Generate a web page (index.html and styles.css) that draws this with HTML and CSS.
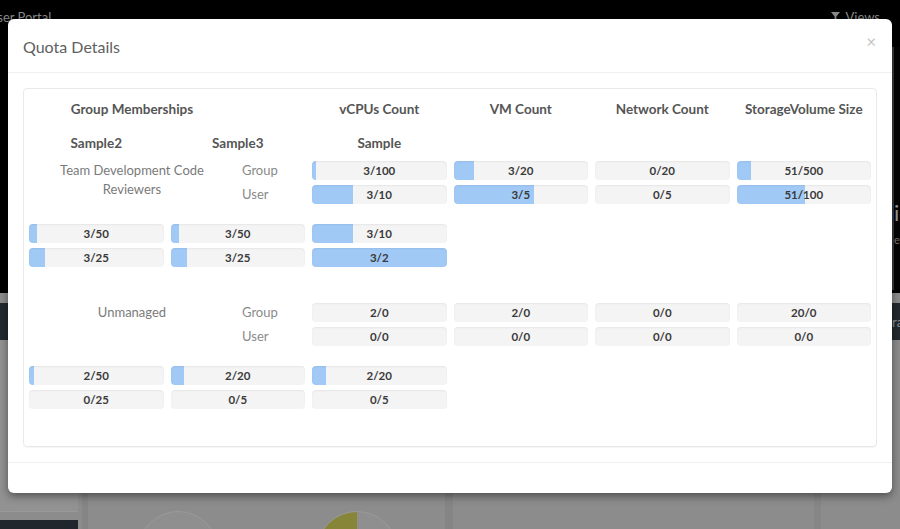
FILE: index.html
```html
<!DOCTYPE html>
<html>
<head>
<meta charset="utf-8">
<title>Quota Details</title>
<link rel="stylesheet" href="styles.css">
</head>
<body>
<div class="page">
  <div class="hero">
    <div class="topbar">
      <span class="brand">User Portal</span>
      <span class="views"><svg class="funnel" viewBox="0 0 10 12" width="9" height="11"><path d="M0 0h10L6 5v6l-2 1V5z" fill="#8a8a8a"/></svg>Views</span>
    </div>
    <div class="hero-body">
      <div class="side"><div class="side-title">ie</div><div class="side-sub">ev</div></div>
    </div>
  </div>
  <div class="tabbar"><span class="tab-text">ra</span></div>
  <div class="content">
    <aside class="sidebar"><div class="sb-box"></div><div class="sb-dark"></div></aside>
    <div class="cards">
      <div class="card first"><div class="chart plain"></div><div class="chart pie"></div></div>
      <div class="card second"></div>
      <div class="card third"></div>
    </div>
  </div>
</div>

<div class="modal">
  <div class="modal-header">
    <h4 class="modal-title">Quota Details</h4>
    <span class="close">×</span>
  </div>
  <div class="modal-body">
    <div class="panel">
      <div class="grid head">
        <div class="span2"><div class="name">Group Memberships</div></div>
        <div>vCPUs Count</div>
        <div>VM Count</div>
        <div>Network Count</div>
        <div>StorageVolume Size</div>
      </div>
      <div class="grid head samples">
        <div>Sample2</div>
        <div>Sample3</div>
        <div>Sample</div>
      </div>

      <div class="section">
        <div class="grid main">
          <div class="who">
            <div class="name">Team Development Code Reviewers</div>
            <div class="labels"><span>Group</span><span>User</span></div>
          </div>
          <div class="bar" style="--p:3%">3/100</div>
          <div class="bar" style="--p:15%">3/20</div>
          <div class="bar" style="--p:0%">0/20</div>
          <div class="bar" style="--p:10.2%">51/500</div>
          <div class="bar" style="--p:30%">3/10</div>
          <div class="bar" style="--p:60%">3/5</div>
          <div class="bar" style="--p:0%">0/5</div>
          <div class="bar" style="--p:51%">51/100</div>
        </div>
        <div class="grid sub">
          <div class="bar" style="--p:6%">3/50</div>
          <div class="bar" style="--p:6%">3/50</div>
          <div class="bar" style="--p:30%">3/10</div>
        </div>
        <div class="grid sub">
          <div class="bar" style="--p:12%">3/25</div>
          <div class="bar" style="--p:12%">3/25</div>
          <div class="bar" style="--p:100%">3/2</div>
        </div>
      </div>

      <div class="section second">
        <div class="grid main">
          <div class="who">
            <div class="name">Unmanaged</div>
            <div class="labels"><span>Group</span><span>User</span></div>
          </div>
          <div class="bar" style="--p:0%">2/0</div>
          <div class="bar" style="--p:0%">2/0</div>
          <div class="bar" style="--p:0%">0/0</div>
          <div class="bar" style="--p:0%">20/0</div>
          <div class="bar" style="--p:0%">0/0</div>
          <div class="bar" style="--p:0%">0/0</div>
          <div class="bar" style="--p:0%">0/0</div>
          <div class="bar" style="--p:0%">0/0</div>
        </div>
        <div class="grid sub">
          <div class="bar" style="--p:4%">2/50</div>
          <div class="bar" style="--p:10%">2/20</div>
          <div class="bar" style="--p:10%">2/20</div>
        </div>
        <div class="grid sub">
          <div class="bar" style="--p:0%">0/25</div>
          <div class="bar" style="--p:0%">0/5</div>
          <div class="bar" style="--p:0%">0/5</div>
        </div>
      </div>
    </div>
  </div>
  <div class="modal-footer"></div>
</div>
</body>
</html>
```

FILE: styles.css
```css
* { box-sizing: border-box; }
html, body { margin: 0; padding: 0; }
body {
  width: 900px;
  height: 529px;
  overflow: hidden;
  position: relative;
  background: #8c8c8c;
  font-family: "Lato", "Open Sans", sans-serif;
}

/* ---------- dimmed page behind the dialog ---------- */
.page { width: 900px; height: 529px; overflow: hidden; }
.hero { height: 293px; background: #000; display: flex; flex-direction: column; }
.topbar {
  height: 34px;
  display: flex;
  justify-content: space-between;
  align-items: center;
  padding: 0 20px 0 0;
  color: #8a8a8a;
  font-size: 13px;
}
.brand { margin-left: -12px; }
.views { display: flex; align-items: center; gap: 5px; }
.hero-body { flex: 1; display: flex; justify-content: flex-end; padding-top: 13px; padding-bottom: 3px; }
.side {
  width: 8px;
  border-left: 2px solid #3c3c3c;
  background: #050505;
  overflow: hidden;
  white-space: nowrap;
  padding-top: 154px;
  color: #9a9a9a;
}
.side-title { font-size: 22px; line-height: 24px; }
.side-sub { font-size: 11px; margin-top: 8px; color: #777; }
.tabbar {
  margin-top: 10px;
  height: 37px;
  background: #23292e;
  display: flex;
  justify-content: flex-end;
  align-items: center;
  color: #8a949c;
  font-size: 13px;
}
.tab-text { width: 8px; overflow: hidden; white-space: nowrap; }
.content { display: flex; height: 189px; }
.sidebar { width: 82px; display: flex; flex-direction: column; }
.sb-box { width: 78px; height: 172px; background: #929292; border-bottom: 1px solid #999; }
.sb-dark { width: 78px; margin-top: 8px; flex: 1; background: #20262b; }
.cards { flex: 1; display: flex; border-left: 6px solid #858585; }
.card { height: 100%; }
.card.first { width: 365px; display: flex; gap: 97px; padding: 171px 0 0 49px; border-right: 8px solid #858585; }
.card.second { width: 368px; border-right: 7px solid #868686; }
.card.third { flex: 1; }
.chart { width: 82px; height: 82px; border-radius: 50%; border: 1px solid #9a9a9a; background: #8f8f8f; flex: none; }
.chart.pie { background: conic-gradient(#8f8f8f 0 50%, #878638 50% 100%); }

/* ---------- dialog ---------- */
.modal {
  position: absolute;
  left: 8px;
  top: 19px;
  width: 884px;
  height: 474px;
  background: #fff;
  border-radius: 6px;
  box-shadow: 0 3px 9px rgba(0, 0, 0, 0.45);
  display: flex;
  flex-direction: column;
}
.modal-header {
  height: 54px;
  border-bottom: 1px solid #eef0f0;
  display: flex;
  justify-content: space-between;
  align-items: center;
  padding: 0 15px;
}
.modal-title {
  margin: 0;
  margin-top: 1px;
  font-weight: 400;
  font-size: 16px;
  color: #606060;
}
.close {
  color: #c4c4c4;
  font-size: 17px;
  line-height: 1;
  margin-top: -9px;
  margin-right: 1px;
}
.modal-body { padding: 15px; }
.modal-footer { flex: 1; border-top: 1px solid #eef0f0; }

.panel {
  height: 359px;
  border: 1px solid #e8eaea;
  border-radius: 4px;
  box-shadow: 0 1px 1px rgba(0, 0, 0, 0.04);
  padding: 10px 5px 0 5px;
}
.grid {
  display: grid;
  grid-template-columns: repeat(6, 1fr);
  column-gap: 7px;
}
.head {
  height: 20px;
  line-height: 20px;
  font-size: 13.5px;
  font-weight: 700;
  color: #555;
  text-align: center;
}
.span2 { grid-column: 1 / 3; }
.head .name { width: 206px; }
.samples { margin-top: 14px; }

.section { margin-top: 8px; }
.section.second { margin-top: 36px; }
.main { grid-template-rows: 19px 19px; row-gap: 5px; }
.sub { margin-top: 5px; }
.main + .sub { margin-top: 20px; }
.who {
  grid-column: 1 / 3;
  grid-row: 1 / 3;
  display: flex;
  gap: 7px;
  font-size: 13px;
  line-height: 19px;
}
.who .name { width: 206px; padding: 0 8px; text-align: center; color: #7a7a7a; }
.labels { display: flex; flex-direction: column; gap: 5px; color: #8a8a8a; }

.bar {
  height: 19px;
  border-radius: 4px;
  background: linear-gradient(to right, #a0c9f6 var(--p), #f4f4f4 var(--p));
  box-shadow: inset 0 1px 2px rgba(0, 0, 0, 0.06);
  font-size: 11.5px;
  font-weight: 700;
  color: #3a3a3a;
  line-height: 19px;
  text-align: center;
}
```
